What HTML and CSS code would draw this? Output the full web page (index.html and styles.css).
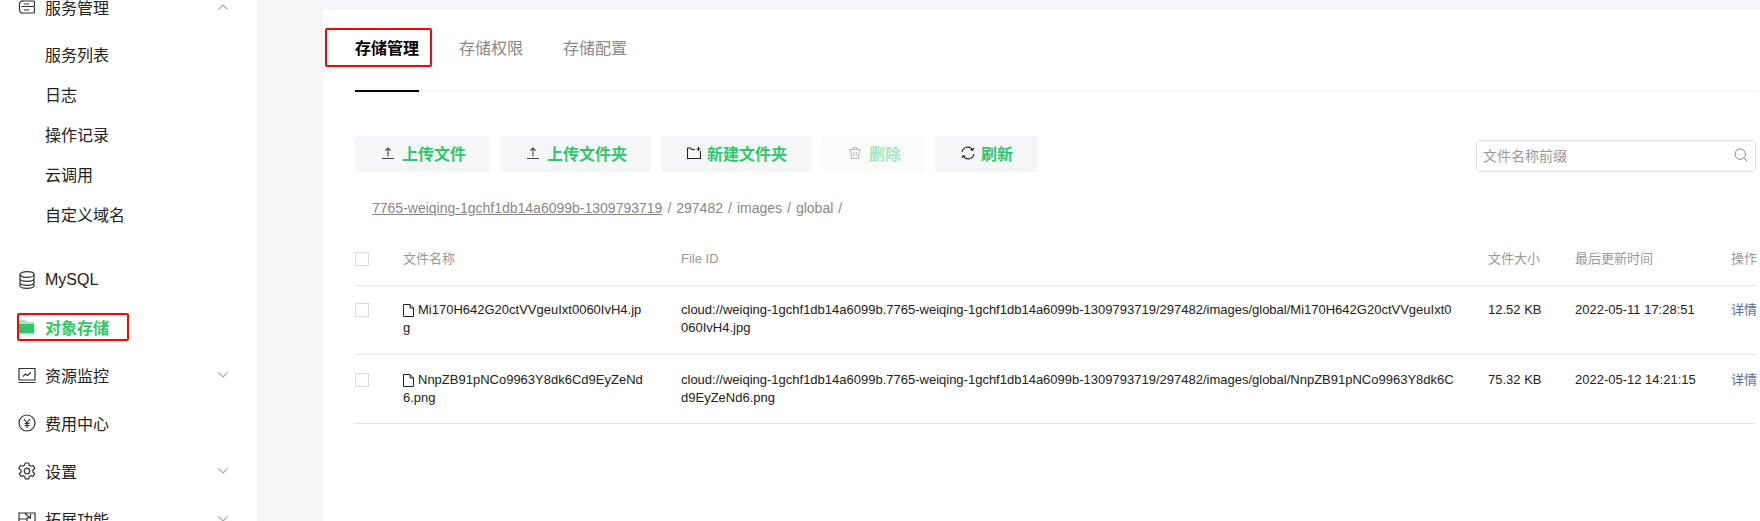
FILE: index.html
```html
<!DOCTYPE html>
<html lang="zh-CN">
<head>
  <meta charset="UTF-8" />
  <meta name="viewport" content="width=device-width, initial-scale=1.0" />
  <title>对象存储</title>
  <link rel="stylesheet" href="styles.css">
</head>
<body>
  <aside class="sidebar">
    <div class="nav-item nav-first">
      <svg class="nav-icon" viewBox="0 0 18 18"><path d="M5 3h10.500a1 1 0 0 1 1 1v3.500a1 1 0 0 1-1 1H3.500M3.500 8.500h12a1 1 0 0 1 1 1V14a1 1 0 0 1-1 1H5M5 3a3 3 0 0 0-3.500 3v6A3 3 0 0 0 5 15M6 6h5M6 12h5"/></svg>
      <span>服务管理</span>
      <svg class="chevron" viewBox="0 0 10 6"><path d="M.5 5.500 5 1l4.500 4.500"/></svg>
    </div>
    <div class="sub-list">
      <div class="sub-item">服务列表</div>
      <div class="sub-item">日志</div>
      <div class="sub-item">操作记录</div>
      <div class="sub-item">云调用</div>
      <div class="sub-item">自定义域名</div>
    </div>
    <div class="nav-item nav-mysql">
      <svg class="nav-icon" viewBox="0 0 18 18"><ellipse cx="9" cy="3.500" rx="7" ry="2.800"/><path d="M2 3.500v11c0 1.600 3.100 2.800 7 2.800s7-1.200 7-2.800v-11M2 7.500c0 1.600 3.100 2.800 7 2.800s7-1.200 7-2.800M2 11.500c0 1.600 3.100 2.800 7 2.800s7-1.200 7-2.800"/></svg>
      <span>MySQL</span>
    </div>
    <div class="nav-item nav-active">
      <svg class="nav-icon" viewBox="0 0 18 18"><path class="folder-back" d="M1 2h6l2 2h7.500v12.500H1z"/><path class="folder-front" d="M1 6h15v9H1z"/></svg>
      <span>对象存储</span>
      <div class="mark mark-nav"></div>
    </div>
    <div class="nav-item">
      <svg class="nav-icon" viewBox="0 0 18 18"><path d="M1 2.500h16v11.500H1zM.5 16.500h17M5 10.500l2.500-2.500 2 1.500L13 6.500"/></svg>
      <span>资源监控</span>
      <svg class="chevron" viewBox="0 0 10 6"><path d="M.5.500 5 5l4.500-4.500"/></svg>
    </div>
    <div class="nav-item">
      <svg class="nav-icon" viewBox="0 0 18 18"><circle cx="9" cy="9" r="8"/><path d="M6 5l3 4 3-4M9 9v5M6.500 9.500h5M6.500 11.500h5"/></svg>
      <span>费用中心</span>
    </div>
    <div class="nav-item">
      <svg class="nav-icon" viewBox="0 0 18 18"><circle cx="9" cy="9" r="2.800"/><path d="M7.300 1h3.400l.5 2.300 1.500.9 2.300-.7 1.700 2.900-1.800 1.600v1.900l1.800 1.600-1.700 2.900-2.300-.7-1.500.9-.5 2.300H7.300l-.5-2.300-1.500-.9-2.300.7-1.700-2.900 1.800-1.600V8L.8 6.400l1.700-2.900 2.300.7 1.500-.9z"/></svg>
      <span>设置</span>
      <svg class="chevron" viewBox="0 0 10 6"><path d="M.5.500 5 5l4.500-4.500"/></svg>
    </div>
    <div class="nav-item">
      <svg class="nav-icon" viewBox="0 0 18 18"><path d="M1 3h16v12H1zM9 15V9H1M7 3.500 12 8M8.500 8h4V4"/></svg>
      <span>拓展功能</span>
      <svg class="chevron" viewBox="0 0 10 6"><path d="M.5.500 5 5l4.500-4.500"/></svg>
    </div>
  </aside>

  <div class="content">
    <main class="panel">
      <div class="tabs">
        <div class="tab tab-active">存储管理</div>
        <div class="tab">存储权限</div>
        <div class="tab">存储配置</div>
        <div class="mark mark-tab"></div>
      </div>

      <div class="toolbar">
        <div class="buttons">
          <button class="btn">
            <svg viewBox="0 0 12 12"><path d="M0 11.500h12M6 9.500V1M3.300 3.700 6 1l2.700 2.700"/></svg>
            上传文件
          </button>
          <button class="btn">
            <svg viewBox="0 0 12 12"><path d="M0 11.500h12M6 9.500V1M3.300 3.700 6 1l2.700 2.700"/></svg>
            上传文件夹
          </button>
          <button class="btn btn-alt">
            <svg viewBox="0 0 14 14"><path d="M8 3.500H4.500L3.500 2H.5v10.500h13V5M11.500 1v4M9.500 3h4"/></svg>
            新建文件夹
          </button>
          <button class="btn btn-disabled">
            <svg viewBox="0 0 12 12"><path d="M0 2.500h12M4 2.500V.5h4v2M1.500 2.500 2.500 11.500h7l1-9M4.700 5v4M7.300 5v4"/></svg>
            删除
          </button>
          <button class="btn btn-alt">
            <svg viewBox="0 0 14 14"><path d="M1 6a6 6 0 0 1 10.800-2.300M13 8a6 6 0 0 1-10.800 2.300M12.800 2 11.800 4.300 9.500 3.500M1.200 12l1-2.300 2.300.8"/></svg>
            刷新
          </button>
        </div>
        <div class="search">
          <span class="search-text">文件名称前缀</span>
          <svg viewBox="0 0 14 14"><circle cx="6.200" cy="6.200" r="5.200"/><path d="M10 10l3 3"/></svg>
        </div>
      </div>

      <div class="crumbs">
        <a class="crumb-link">7765-weiqing-1gchf1db14a6099b-1309793719</a><span class="sep">/</span>297482<span class="sep">/</span>images<span class="sep">/</span>global<span class="sep">/</span>
      </div>

      <table class="files">
        <colgroup>
          <col class="col-check"><col class="col-name"><col class="col-id"><col class="col-size"><col class="col-time"><col class="col-op">
        </colgroup>
        <thead>
          <tr>
            <th><div class="checkbox"></div></th>
            <th>文件名称</th>
            <th>File ID</th>
            <th>文件大小</th>
            <th>最后更新时间</th>
            <th>操作</th>
          </tr>
        </thead>
        <tbody>
          <tr>
            <td><div class="checkbox"></div></td>
            <td class="wrap">
              <svg class="file-icon" viewBox="0 0 11 13"><path d="M.5.500h6.500l3.500 3.500v8.500H.5zM7 .5V4h3.500"/></svg>Mi170H642G20ctVVgeuIxt0060IvH4.jpg
            </td>
            <td class="wrap">cloud://weiqing-1gchf1db14a6099b.7765-weiqing-1gchf1db14a6099b-1309793719/297482/images/global/Mi170H642G20ctVVgeuIxt0060IvH4.jpg</td>
            <td>12.52 KB</td>
            <td>2022-05-11 17:28:51</td>
            <td class="op">详情</td>
          </tr>
          <tr>
            <td><div class="checkbox"></div></td>
            <td class="wrap">
              <svg class="file-icon" viewBox="0 0 11 13"><path d="M.5.500h6.500l3.500 3.500v8.500H.5zM7 .5V4h3.500"/></svg>NnpZB91pNCo9963Y8dk6Cd9EyZeNd6.png
            </td>
            <td class="wrap">cloud://weiqing-1gchf1db14a6099b.7765-weiqing-1gchf1db14a6099b-1309793719/297482/images/global/NnpZB91pNCo9963Y8dk6Cd9EyZeNd6.png</td>
            <td>75.32 KB</td>
            <td>2022-05-12 14:21:15</td>
            <td class="op">详情</td>
          </tr>
        </tbody>
      </table>
    </main>
  </div>
</body>
</html>
```

FILE: styles.css
```css
/* --- basic reset ---------------------------------------------------- */
* {
  margin: 0;
  padding: 0;
  box-sizing: border-box;
}

:root {
  --bg: #f5f6f8;
  --green: #2fc76a;
  --text: #222;
  --muted: #888;
  --line: #e6e6e6;
  --red: #f00;
}

html, body {
  height: 100%;
  overflow: hidden;
}

body {
  display: flex;
  font-family: "Liberation Sans", "Noto Sans CJK SC", sans-serif;
  color: var(--text);
  background: var(--bg);
}

/* --- sidebar -------------------------------------------------------- */
.sidebar {
  width: 257px;
  flex: none;
  background: #fff;
  font-size: 16px;
  overflow: hidden;
}

.nav-item {
  position: relative;
  display: flex;
  align-items: center;
  height: 48px;
  padding-left: 18px;
}

/* the page is scrolled, the first row is cut by the window */
.nav-first {
  margin-top: -17px;
}

.nav-mysql {
  height: 47px;
}

.nav-icon {
  width: 18px;
  height: 18px;
  margin-right: 9px;
  flex: none;
  fill: none;
  stroke: #333;
  stroke-width: 1.2;
}

.chevron {
  position: absolute;
  left: 218px;
  top: 21px;
  width: 10px;
  height: 6px;
  fill: none;
  stroke: #aaa;
  stroke-width: 1.2;
}

.nav-active {
  color: var(--green);
  font-weight: 700;
}

.folder-back {
  fill: #a5e5bd;
  stroke: none;
}

.folder-front {
  fill: var(--green);
  stroke: none;
}

.sub-list {
  padding: 5px 0 20px 45px;
}

.sub-item {
  height: 40px;
  line-height: 40px;
}

/* red annotation boxes */
.mark {
  position: absolute;
  border: 2px solid var(--red);
  border-radius: 2px;
}

.mark-nav {
  left: 17px;
  top: 10px;
  width: 112px;
  height: 28px;
}

.mark-tab {
  left: -30px;
  top: 18px;
  width: 107px;
  height: 39px;
}

/* --- main panel ----------------------------------------------------- */
.content {
  flex: 1;
  min-width: 0;
  padding: 10px 0 0 66px;
}

.panel {
  height: 100%;
  padding: 0 4px 0 32px;
  background: #fff;
  border-top-left-radius: 4px;
}

.tabs {
  position: relative;
  display: flex;
  gap: 40px;
  border-bottom: 2px solid var(--bg);
  height: 82px;
}

.tab {
  height: 82px;
  padding-top: 28px;
  font-size: 16px;
  line-height: 22px;
  color: var(--muted);
}

.tab-active {
  color: #000;
  font-weight: 700;
  border-bottom: 2px solid #000;
}

/* --- toolbar -------------------------------------------------------- */
.toolbar {
  display: flex;
  justify-content: space-between;
  align-items: flex-end;
  margin-top: 44px;
}

.buttons {
  display: flex;
  gap: 10px;
}

.btn {
  display: flex;
  align-items: center;
  gap: 8px;
  height: 36px;
  padding: 0 24px 3px 27px;
  border: none;
  border-radius: 4px;
  background: var(--bg);
  color: var(--green);
  font: 700 16px "Liberation Sans", "Noto Sans CJK SC", sans-serif;
}

.btn svg {
  width: 12px;
  height: 12px;
  flex: none;
  fill: none;
  stroke: #444;
  stroke-width: 1.1;
}

.btn-alt {
  gap: 6px;
  padding: 0 25px 3px 26px;
}

.btn-alt svg {
  width: 14px;
  height: 14px;
  stroke: #222;
}

.btn-disabled {
  background: #fafbfb;
  color: #a8e8c0;
}

.btn-disabled svg {
  stroke: #bbb;
}

.search {
  display: flex;
  align-items: center;
  justify-content: space-between;
  width: 280px;
  height: 32px;
  padding: 0 7px 2px 6px;
  border: 1px solid #ddd;
  border-radius: 3px;
  font-size: 14px;
  color: #999;
}

.search svg {
  width: 14px;
  height: 14px;
  fill: none;
  stroke: #888;
}

/* --- breadcrumb ----------------------------------------------------- */
.crumbs {
  margin-top: 26px;
  padding-left: 17px;
  font-size: 14px;
  line-height: 20px;
  color: var(--muted);
}

.crumb-link {
  text-decoration: underline;
}

.sep {
  margin: 0 5px;
}

/* --- table ---------------------------------------------------------- */
.files {
  width: 100%;
  margin-top: 15px;
  table-layout: fixed;
  border-collapse: collapse;
  font-size: 13px;
  line-height: 18px;
}

.col-check { width: 48px; }
.col-name { width: 278px; }
.col-id { width: 807px; }
.col-size { width: 87px; }
.col-time { width: 156px; }

.files th {
  height: 52px;
  font-weight: 400;
  text-align: left;
  color: #999;
  border-bottom: 1px solid var(--line);
  white-space: nowrap;
}

.files td {
  height: 69px;
  padding-top: 15px;
  vertical-align: top;
  border-bottom: 1px solid var(--line);
  white-space: nowrap;
}

.files tbody tr:last-child td {
  padding-top: 16px;
}

.files td.wrap {
  padding-right: 33px;
  white-space: normal;
  word-break: break-all;
}

.op {
  color: #5a6b9a;
}

.checkbox {
  width: 14px;
  height: 14px;
  border: 1px solid #ddd;
  background: #fff;
}

.files td .checkbox {
  margin-top: 2px;
}

.file-icon {
  width: 11px;
  height: 13px;
  margin-right: 4px;
  vertical-align: -3px;
  fill: none;
  stroke: #222;
}
```
